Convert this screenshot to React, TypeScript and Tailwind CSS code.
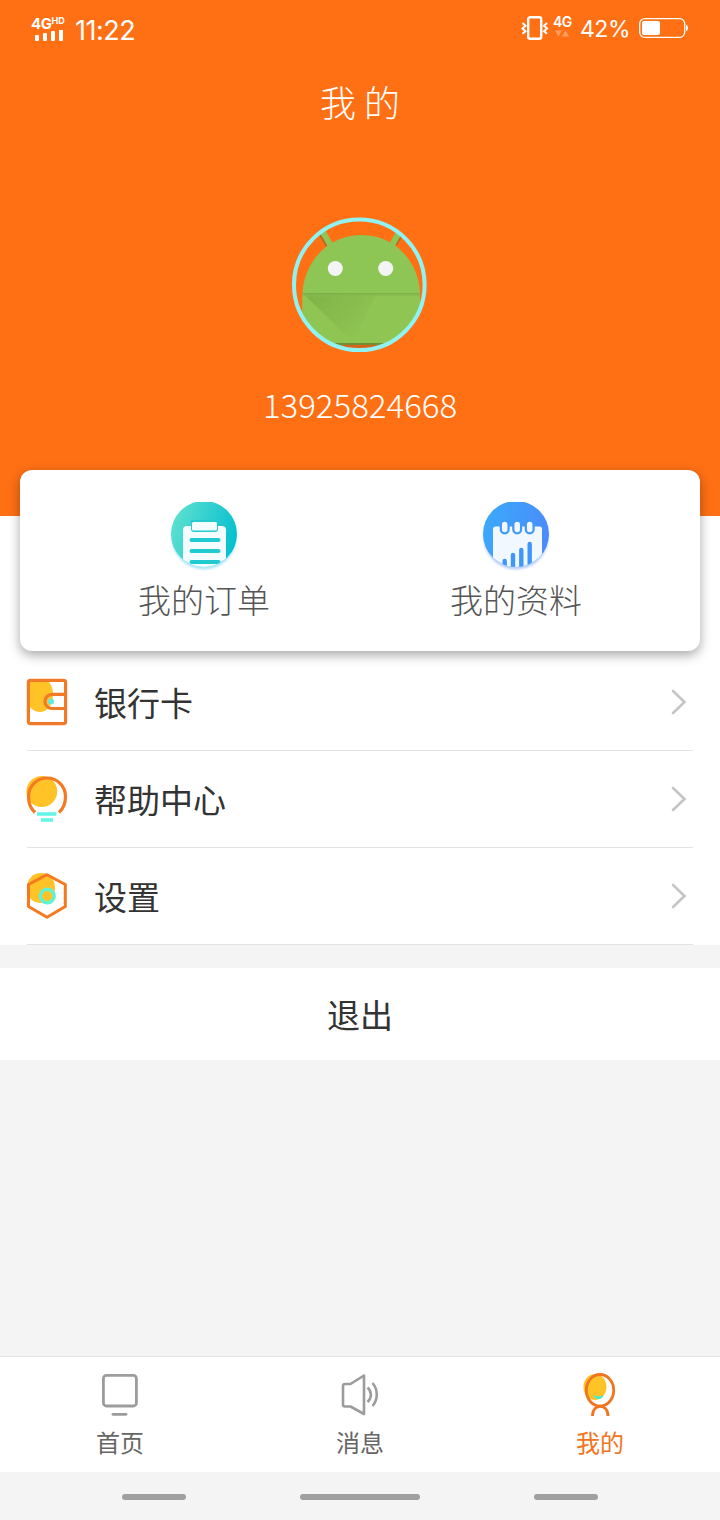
import type { ReactNode } from "react";

function StatusBar() {
  return (
    <div className="flex h-[56px] items-center justify-between pr-[32px] pl-[31px] text-white">
      <div className="flex items-center">
        <div className="flex w-[36px] flex-col">
          <div className="flex h-[14px] items-start font-['Inter'] font-bold leading-none">
            <span className="text-[15px] tracking-[-0.5px]">4G</span>
            <span className="text-[9px]">HD</span>
          </div>
          <svg width="36" height="11" viewBox="0 0 36 11" fill="currentColor">
            <rect x="4" y="5" width="4" height="6" rx="1" />
            <rect x="12" y="3" width="4" height="8" rx="1" />
            <rect x="20" y="1" width="4" height="10" rx="1" />
            <rect x="28" y="-4" width="4" height="15" rx="1" />
          </svg>
        </div>
        <span className="ml-[8px] pt-[4px] font-['Inter'] text-[27px] leading-none tracking-[-0.5px]">
          11:22
        </span>
      </div>
      <div className="flex items-center">
        <svg
          width="28"
          height="26"
          viewBox="0 0 28 26"
          fill="none"
          stroke="currentColor"
          strokeWidth="2.4"
        >
          <rect x="7.2" y="2.2" width="13" height="21.6" rx="2" />
          <path d="M1.5 8l3 2.7-3 2.8 3 2.7-3 2.6M26 8l-3 2.7 3 2.8-3 2.7 3 2.6" strokeWidth="2" />
        </svg>
        <div className="ml-[4px] flex w-[20px] flex-col">
          <span className="font-['Inter'] text-[14px] font-semibold leading-[14px] tracking-[-0.5px]">
            4G
          </span>
          <svg width="18" height="12" viewBox="0 0 18 12" fill="#ff9d63">
            <path d="M2 1.500h7L5.500 7.500zM9 7.500h7L12.500 1.500z" />
          </svg>
        </div>
        <span className="ml-[7px] pt-[3px] font-['Inter'] text-[23px] leading-none tracking-[-0.5px]">
          42%
        </span>
        <svg className="ml-[9px]" width="49" height="20" viewBox="0 0 49 20">
          <rect x="0.700" y="0.700" width="45" height="18.600" rx="5" fill="none" stroke="currentColor" strokeWidth="1.300" />
          <rect x="3" y="3" width="18" height="14" rx="2" fill="currentColor" />
          <path d="M47 6.500q2 .5 2 3.500t-2 3.500z" fill="currentColor" />
        </svg>
      </div>
    </div>
  );
}

function Avatar() {
  return (
    <svg width="136" height="136" viewBox="0 0 136 136">
      <defs>
        <clipPath id="face">
          <circle cx="68" cy="68" r="65" />
        </clipPath>
        <linearGradient id="jaw" x1="0" y1="0" x2="1" y2="0.6">
          <stop offset="0" stopColor="#7fb146" />
          <stop offset="1" stopColor="#8fc653" />
        </linearGradient>
        <linearGradient id="seam" x1="0" y1="0" x2="0" y2="1">
          <stop offset="0" stopColor="#7cab48" />
          <stop offset="1" stopColor="#8fc653" stopOpacity="0" />
        </linearGradient>
      </defs>
      <g clipPath="url(#face)">
        <path d="M27 14l9 14M110 14l-7 13" stroke="#b5672a" strokeWidth="5" />
        <path d="M29 12l10 17M109 12l-9 16" stroke="#8fc557" strokeWidth="6" />
        <path d="M10.500 76C12 45 36 18 69.500 18S127 45 128 76z" fill="#8ec656" />
        <path d="M10.500 76H128V126H10.500z" fill="#8fc653" />
        <path d="M10.500 76H85L60 126z" fill="url(#jaw)" />
        <path d="M10.500 76L62 126H10.500z" fill="#8fc653" />
        <path d="M10.500 76H128v5H10.500z" fill="url(#seam)" />
        <path d="M30 126H110V128H30z" fill="#718d35" />
        <path d="M30 128H110V134H30z" fill="#d96318" />
      </g>
      <circle cx="43.300" cy="51.500" r="7.500" fill="#f4f4f4" />
      <circle cx="93.700" cy="51.500" r="7.500" fill="#f4f4f4" />
      <circle cx="67.300" cy="67.800" r="65.300" fill="none" stroke="#8ff3f3" strokeWidth="4" />
    </svg>
  );
}

function OrderIcon() {
  return (
    <svg width="72" height="74" viewBox="0 0 72 74">
      <defs>
        <linearGradient id="teal" x1="0" y1="0.3" x2="1" y2="0.6">
          <stop offset="0" stopColor="#5ee0d0" />
          <stop offset="1" stopColor="#05bfcf" />
        </linearGradient>
        <clipPath id="orderClip">
          <path d="M0 2h72v72H0z" />
        </clipPath>
        <clipPath id="orderDisc">
          <circle cx="36" cy="34" r="33" />
        </clipPath>
        <filter id="orderGlow">
          <feGaussianBlur stdDeviation="1.300" />
        </filter>
      </defs>
      <g clipPath="url(#orderClip)">
        <circle cx="36" cy="37" r="32.500" fill="#a9e6fb" filter="url(#orderGlow)" />
        <circle cx="36" cy="34" r="33" fill="url(#teal)" />
        <g clipPath="url(#orderDisc)">
          <rect x="15" y="26" width="43" height="48" rx="4" fill="#f3fdff" />
          <path d="M23 20h27v9a3 3 0 0 1-3 3H26a3 3 0 0 1-3-3z" fill="#25cbd0" />
          <rect x="24" y="22" width="25" height="8.500" rx="1.500" fill="#f3fdff" />
          <path d="M23.500 40h27M23.500 51h27M23.500 62h27" stroke="#1fcbd0" strokeWidth="4" strokeLinecap="round" />
        </g>
      </g>
    </svg>
  );
}

function ProfileIcon() {
  return (
    <svg width="72" height="74" viewBox="0 0 72 74">
      <defs>
        <linearGradient id="blue" x1="0" y1="0.3" x2="1" y2="0.6">
          <stop offset="0" stopColor="#3ba9fb" />
          <stop offset="1" stopColor="#4b8afa" />
        </linearGradient>
        <clipPath id="profileClip">
          <path d="M0 2h72v72H0z" />
        </clipPath>
        <clipPath id="profileDisc">
          <circle cx="36" cy="34" r="33" />
        </clipPath>
        <filter id="profileGlow">
          <feGaussianBlur stdDeviation="1.300" />
        </filter>
      </defs>
      <g clipPath="url(#profileClip)">
        <circle cx="36" cy="37" r="32.500" fill="#b7cdfb" filter="url(#profileGlow)" />
        <circle cx="36" cy="34" r="33" fill="url(#blue)" />
        <g clipPath="url(#profileDisc)">
          <rect x="13" y="26.500" width="49" height="48" rx="2.500" fill="#f1f8ff" />
          <path d="M24.700 25.500v4M37.200 25.500v4M49.700 25.500v4" stroke="#4199fa" strokeWidth="10" strokeLinecap="round" />
          <path d="M24.700 24.500v5M37.200 24.500v5M49.700 24.500v5" stroke="#f1f8ff" strokeWidth="5.500" strokeLinecap="round" />
          <path d="M24.700 61v12M33 55v20M41.300 50v25M49.700 44v30" stroke="#3f97fa" strokeWidth="4.400" strokeLinecap="round" />
        </g>
      </g>
    </svg>
  );
}

function WalletIcon() {
  return (
    <svg width="42" height="48" viewBox="0 0 42 48" fill="none">
      <path d="M2 3h20c4 4 5 9 5 14 0 10-6 17-13 17-5 0-9-3-12-7z" fill="#ffc328" />
      <rect x="2.400" y="2.400" width="37.200" height="43.200" rx="2" stroke="#f17a28" strokeWidth="3.200" />
      <path d="M39.500 16.300H26a7 7 0 0 0-7 7v.7a7 7 0 0 0 7 6.500h13.500" stroke="#f17a28" strokeWidth="3.200" />
      <circle cx="25" cy="23.500" r="3" fill="#5eecdc" />
    </svg>
  );
}

function BulbIcon() {
  return (
    <svg width="42" height="48" viewBox="0 0 42 48" fill="none">
      <circle cx="15.800" cy="16.500" r="15.400" fill="#ffc328" />
      <path d="M9 37.500C4.500 33.500 2.500 27.500 2.500 21.500a18.500 18.500 0 0 1 37 0c0 6-2 12-6.500 16" stroke="#f57920" strokeWidth="3.200" />
      <path d="M11 39h19.500M15 45h12" stroke="#62f5e8" strokeWidth="3.600" />
    </svg>
  );
}

function SettingsIcon() {
  return (
    <svg width="42" height="48" viewBox="0 0 42 48" fill="none">
      <path d="M1 16C1 7 7 1 15 1s14 6 14 15-6 15-14 15S1 26 1 16z" fill="#ffc328" />
      <circle cx="21.300" cy="24" r="6.800" stroke="#62f2d2" strokeWidth="3.600" fill="#ffc328" />
      <path d="M21 2.700L39.300 12.500V34.500L21 45.300 2.500 34.500V12.500z" stroke="#f57920" strokeWidth="3" strokeLinejoin="round" />
    </svg>
  );
}

function Row({ icon, label }: { icon: ReactNode; label: string }) {
  return (
    <div className="mx-[27px] flex h-[97px] items-center border-b border-[#e2e2e2]">
      <span className="-ml-px">{icon}</span>
      <span className="ml-[26px] flex-1 text-[33px] leading-[48px] text-[#333]">{label}</span>
      <svg className="mr-[6px]" width="16" height="26" viewBox="0 0 16 26" fill="none">
        <path d="M2 2l11.500 11L2 24" stroke="#c5c5c5" strokeWidth="2.600" strokeLinecap="round" />
      </svg>
    </div>
  );
}

function Tab({ icon, label, active }: { icon: ReactNode; label: string; active?: boolean }) {
  return (
    <div className="flex flex-1 flex-col items-center pt-[16px]">
      {icon}
      <span className={`mt-[7px] text-[24px] leading-[35px] ${active ? "text-[#f27321]" : "text-[#666]"}`}>
        {label}
      </span>
    </div>
  );
}

export default function App() {
  return (
    <div className="flex h-[1520px] w-[720px] flex-col overflow-hidden bg-[#f4f4f4] font-['Noto_Sans_CJK_SC',sans-serif]">
      <header className="flex h-[516px] flex-none flex-col bg-[#ff7014] text-white">
        <StatusBar />
        <h1 className="mt-[18px] text-center text-[36px] font-light leading-[54px]">我 的</h1>
        <div className="mt-[89px] flex justify-center">
          <Avatar />
        </div>
        <p className="mt-[27px] text-center text-[33px] font-light leading-[48px]">13925824668</p>
      </header>

      <main className="bg-white">
        {/* Shortcuts card overlapping the header */}
        <div className="relative mx-[20px] -mt-[46px] flex h-[181px] rounded-[12px] bg-white px-[28px] shadow-[0_4px_12px_rgba(0,0,0,0.35)]">
          <div className="flex flex-1 flex-col items-center pt-[30px]">
            <OrderIcon />
            <span className="mt-[1px] text-[33px] font-light leading-[48px] text-[#555]">我的订单</span>
          </div>
          <div className="flex flex-1 flex-col items-center pt-[30px]">
            <ProfileIcon />
            <span className="mt-[1px] text-[33px] font-light leading-[48px] text-[#555]">我的资料</span>
          </div>
        </div>
        <div className="mt-[3px]">
          <Row icon={<WalletIcon />} label="银行卡" />
          <Row icon={<BulbIcon />} label="帮助中心" />
          <Row icon={<SettingsIcon />} label="设置" />
        </div>
      </main>

      <button type="button" className="mt-[23px] h-[92px] flex-none bg-white text-[33px] leading-[48px] text-[#333]">
        退出
      </button>

      <nav className="mt-auto flex h-[116px] flex-none border-t border-[#e2e2e2] bg-white">
        <Tab
          label="首页"
          icon={
            <svg width="44" height="44" viewBox="0 0 44 44" fill="none" stroke="#9c9c9c">
              <rect x="5.400" y="2.400" width="33" height="30.600" rx="3" strokeWidth="2.800" />
              <path d="M15 41.300h13" strokeWidth="2.800" strokeLinecap="round" />
            </svg>
          }
        />
        <Tab
          label="消息"
          icon={
            <svg width="44" height="44" viewBox="0 0 44 44" fill="none" stroke="#9c9c9c" strokeWidth="2.600">
              <path d="M26 2.500V41L12.500 33.500H7a2 2 0 0 1-2-2V13a2 2 0 0 1 2-2h5.500z" strokeLinejoin="round" />
              <path d="M29.500 14.500c4.500 4 4.500 10.500 0 14.500M34.500 10c5.700 6.500 5.700 16.500 0 23" />
            </svg>
          }
        />
        <Tab
          label="我的"
          active
          icon={
            <svg width="44" height="44" viewBox="0 0 44 44" fill="none" stroke="#f17420" strokeWidth="2.800">
              <ellipse cx="17" cy="14" rx="11.500" ry="13" fill="#ffc328" stroke="none" />
              <path d="M15.500 22q5 2.500 9.500 0 0 4-4.500 4-4 0-5-4z" fill="#4fe9cf" stroke="none" />
              <ellipse cx="22" cy="17.300" rx="13.700" ry="15.800" />
              <path d="M14.500 43c0-13 15.500-13 15.500 0" />
            </svg>
          }
        />
      </nav>

      {/* System navigation handles */}
      <div className="flex h-[48px] flex-none items-center justify-center gap-[114px] pt-[2px]">
        <span className="h-[6px] w-[64px] rounded-full bg-[#a0a0a0]" />
        <span className="h-[6px] w-[120px] rounded-full bg-[#a0a0a0]" />
        <span className="h-[6px] w-[64px] rounded-full bg-[#a0a0a0]" />
      </div>
    </div>
  );
}
